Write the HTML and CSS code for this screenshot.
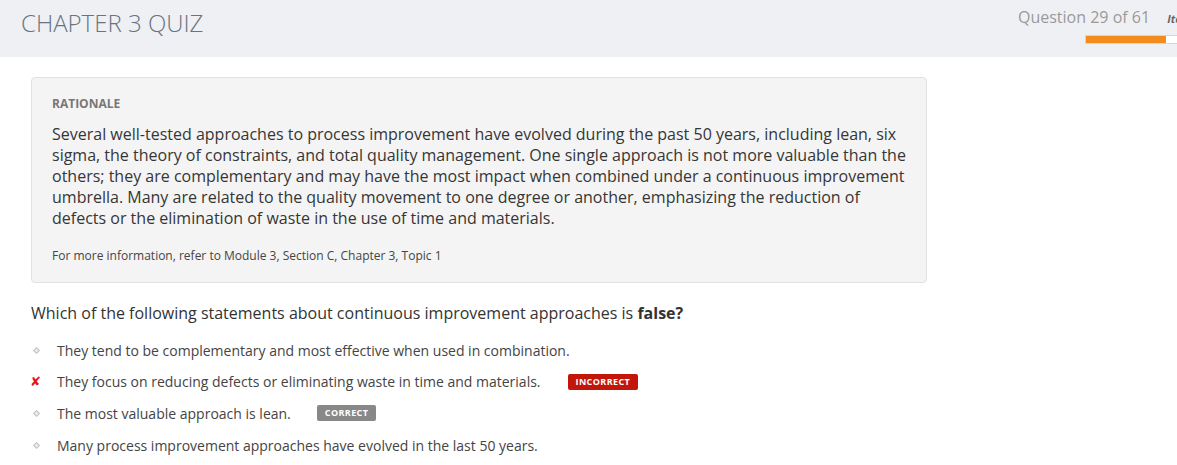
FILE: index.html
```html
<!DOCTYPE html>
<html>
<head>
<meta charset="utf-8">
<link rel="stylesheet" href="styles.css">
</head>
<body>
<header class="top">
  <h1 class="title">CHAPTER 3 QUIZ</h1>
  <div class="meta">
    <div class="meta-row">
      <span class="qcount">Question 29 of 61</span>
      <span class="item">Item 29</span>
    </div>
    <div class="bar"><div class="fill"></div></div>
  </div>
</header>
<main class="content">
  <section class="rationale">
    <div class="label">RATIONALE</div>
    <p class="rtext">Several well-tested approaches to process improvement have evolved during the past 50 years, including lean, six sigma, the theory of constraints, and total quality management. One single approach is not more valuable than the others; they are complementary and may have the most impact when combined under a continuous improvement umbrella. Many are related to the quality movement to one degree or another, emphasizing the reduction of defects or the elimination of waste in the use of time and materials.</p>
    <p class="ref">For more information, refer to Module 3, Section C, Chapter 3, Topic 1</p>
  </section>
  <p class="question">Which of the following statements about continuous improvement approaches is <b>false?</b></p>
  <ul class="options">
    <li class="opt"><span class="mark"><span class="dot"></span></span><span class="otext">They tend to be complementary and most effective when used in combination.</span></li>
    <li class="opt"><span class="mark"><span class="cross">✘</span></span><span class="otext">They focus on reducing defects or eliminating waste in time and materials.</span><span class="badge badge-bad">INCORRECT</span></li>
    <li class="opt"><span class="mark"><span class="dot"></span></span><span class="otext">The most valuable approach is lean.</span><span class="badge badge-ok">CORRECT</span></li>
    <li class="opt"><span class="mark"><span class="dot"></span></span><span class="otext">Many process improvement approaches have evolved in the last 50 years.</span></li>
  </ul>
</main>
</body>
</html>
```
FILE: styles.css
```css
* { box-sizing: border-box; }
html, body { margin: 0; padding: 0; overflow: hidden; }
body {
  font-family: "Open Sans", "Liberation Sans", sans-serif;
  background: #fff;
  color: #333;
  width: 1177px;
  height: 465px;
}
.top {
  height: 57px;
  background: #eff0f4;
  display: flex;
  align-items: flex-start;
  overflow: hidden;
}
.title {
  margin: 0;
  padding: 7px 0 0 21px;
  font-size: 24px;
  line-height: 32px;
  font-weight: 300;
  color: #687483;
  letter-spacing: 0;
}
.meta {
  margin-left: auto;
  margin-right: -70px;
  width: 229px;
  padding-top: 6px;
  display: flex;
  flex-direction: column;
  flex-shrink: 0;
}
.meta-row {
  display: flex;
  align-items: baseline;
  gap: 17px;
  white-space: nowrap;
}
.qcount {
  font-size: 16px;
  line-height: 22px;
  color: #9a9a9a;
}
.item {
  font-size: 11px;
  font-weight: 700;
  font-style: italic;
  color: #666;
}
.bar {
  margin-top: 7px;
  margin-left: 67px;
  width: 110px;
  height: 9px;
  border: 1px solid #d6d6d6;
  background: #fff;
}
.fill {
  width: 80px;
  height: 100%;
  background: #f28c1c;
}
.content {
  padding: 20px 0 0 31px;
}
.rationale {
  width: 896px;
  background: #f4f4f4;
  border: 1px solid #e1e1e1;
  border-radius: 4px;
  padding: 18px 20px 18px 20px;
}
.label {
  font-size: 12px;
  line-height: 16px;
  font-weight: 700;
  color: #777;
}
.rtext {
  margin: 12px 0 0 0;
  font-size: 16px;
  line-height: 21px;
  color: #363636;
}
.ref {
  margin: 19px 0 0 0;
  font-size: 12px;
  line-height: 16px;
  color: #444;
}
.question {
  margin: 19px 0 0 0;
  font-size: 16px;
  line-height: 22px;
  color: #333;
}
.question b { font-weight: 700; }
.options {
  list-style: none;
  margin: 16px 0 0 0;
  padding: 0;
}
.opt {
  display: flex;
  align-items: center;
  height: 20px;
  margin-bottom: 11.7px;
  font-size: 14px;
  color: #444;
}
.mark {
  width: 26px;
  display: flex;
  align-items: center;
  justify-content: flex-start;
  padding-left: 2px;
}
.dot {
  width: 5px;
  height: 5px;
  margin-left: 1px;
  border: 1px solid #c4c4c4;
  transform: rotate(45deg);
  background: #ececec;
}
.cross {
  color: #e8121b;
  font-size: 13px;
  font-style: italic;
  font-family: "DejaVu Sans", sans-serif;
  margin-left: -3px;
}
.badge {
  display: inline-block;
  height: 16px;
  line-height: 16px;
  padding: 0 8px;
  font-size: 9px;
  font-weight: 700;
  letter-spacing: 0.4px;
  color: #fff;
  border-radius: 2px;
}
.badge-bad { background: #c2160b; margin-left: 27px; }
.badge-ok { background: #888; margin-left: 26px; }
```
